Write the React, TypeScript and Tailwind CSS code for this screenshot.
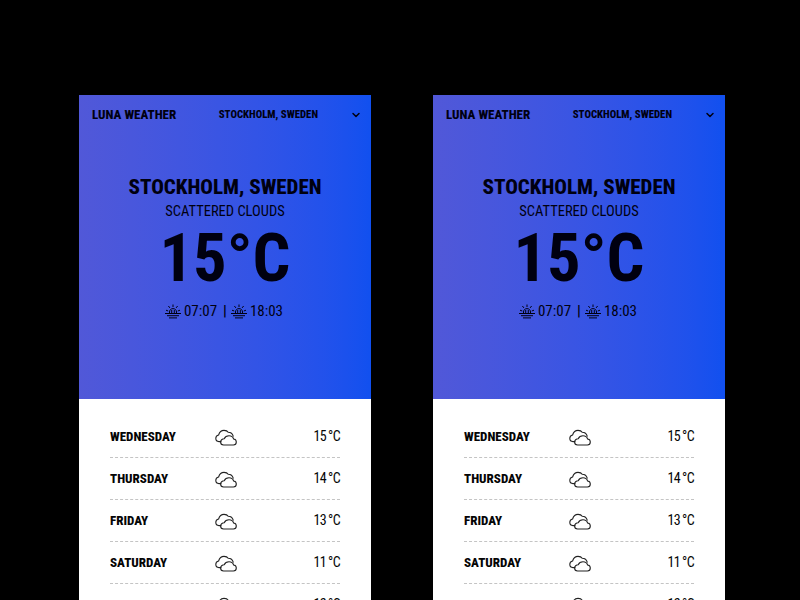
import { ChevronDown } from 'lucide-react';

const days = [
  { name: 'WEDNESDAY', temp: '15' },
  { name: 'THURSDAY', temp: '14' },
  { name: 'FRIDAY', temp: '13' },
  { name: 'SATURDAY', temp: '11' },
  { name: 'SUNDAY', temp: '12' },
];

function CloudsIcon() {
  return (
    <svg className="ml-[1px] mt-[2px]" width="22" height="17" viewBox="0 0 22 17" fill="none" stroke="#222" strokeWidth="1.1" strokeLinejoin="round" strokeLinecap="round">
      <path d="M6 12.6H4C2 12.6 0.8 11 0.8 9.3C0.8 7.6 2 6.3 3.6 6C4.4 3.4 6.4 1.4 9 1.4C11 1.4 12.4 1.9 13.2 3.2C15.6 3.2 17.6 4.8 18.2 7.2" />
      <path d="M8.6 16H18.4C20.2 16 21.3 14.6 21.3 13C21.3 11.4 20.2 10.2 18.6 10C18 8 16.2 6.8 14 6.8C11.8 6.8 10 8 9.2 9.8C7.2 9.8 5.6 11.2 5.6 13C5.6 14.8 6.8 16 8.6 16Z" />
    </svg>
  );
}

function SunIcon() {
  return (
    <svg width="16" height="15" viewBox="0 0 16 15" fill="none" stroke="#000010" strokeWidth="1">
      <path d="M4.5 9V8C4.5 6 6 4.6 8 4.6C10 4.6 11.5 6 11.5 8V9" />
      <path d="M8 0.5V3M3.4 2L4.9 3.9M12.6 2L11.1 3.9M1 6.2L3.2 7M15 6.2L12.8 7M6.7 6V9M9.3 6V9" />
      <path d="M0 9.5H16M2 11.7H14M4 13.9H12" />
    </svg>
  );
}

function Card() {
  return (
    <div className="w-[292px] shrink-0 bg-white">
      <div className="h-[304px] bg-gradient-to-r from-[#5158d8] to-[#1150ef] text-[#000010]">
        <div className="flex items-center justify-between pl-[13px] pr-[9px] pt-[11px]">
          <span className="text-[13px] font-extrabold leading-[16px] [font-stretch:75%]">LUNA WEATHER</span>
          <div className="flex items-center gap-[32px]">
            <span className="mt-[1px] text-[10.8px] font-extrabold leading-[16px] [font-stretch:75%]">STOCKHOLM, SWEDEN</span>
            <ChevronDown size={12} strokeWidth={3} />
          </div>
        </div>
        <div className="mt-[50px] flex flex-col items-center">
          <h1 className="text-[21px] font-extrabold leading-[28px] [font-stretch:75%]">STOCKHOLM, SWEDEN</h1>
          <p className="mt-[1px] text-[14.5px] leading-[20px] [font-stretch:75%]">SCATTERED CLOUDS</p>
          <p className="text-[66.5px] font-bold leading-[72px] [font-stretch:75%]">15°C</p>
          <div className="mt-[8px] flex items-center pr-[2px] text-[15px] leading-[18px] [font-stretch:75%]">
            <SunIcon />
            <span className="ml-[3px]">07:07</span>
            <span className="ml-[6px] font-bold">|</span>
            <span className="ml-[4px]"><SunIcon /></span>
            <span className="ml-[3px]">18:03</span>
          </div>
        </div>
      </div>
      <div className="px-[31px] pt-[17px]">
        {days.map((day) => (
          <div key={day.name} className="grid h-[42px] grid-cols-[104px_1fr_auto] items-center border-b border-dashed border-[#c4c4c4] text-[#050505]">
            <span className="text-[13px] font-extrabold [font-stretch:75%]">{day.name}</span>
            <CloudsIcon />
            <span className="text-[14px] tracking-[-0.6px] [font-stretch:75%]">{day.temp}<span className="ml-[2px]">°C</span></span>
          </div>
        ))}
      </div>
    </div>
  );
}

export default function App() {
  return (
    <div className="flex h-[600px] w-[800px] gap-[62px] overflow-hidden bg-black pl-[79px] pt-[95px] font-['Roboto',sans-serif]">
      <Card />
      <Card />
    </div>
  );
}
